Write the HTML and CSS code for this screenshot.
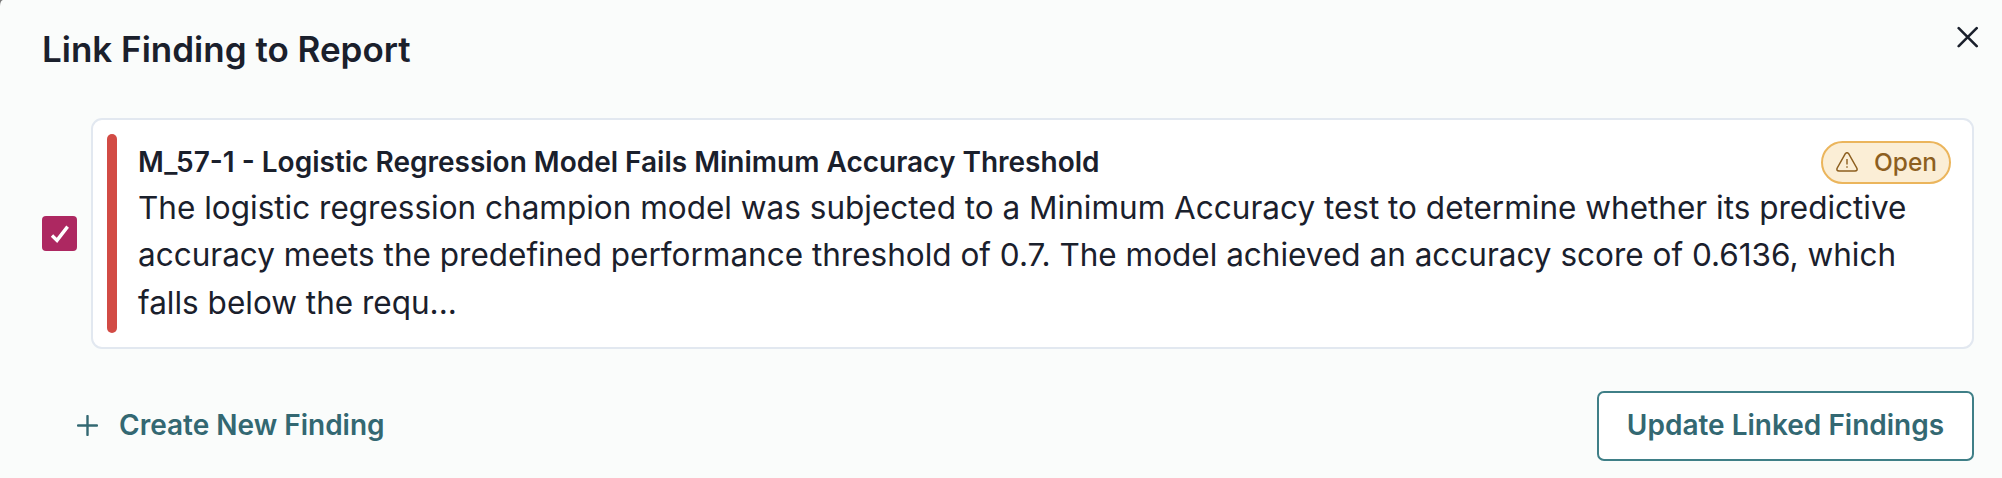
FILE: index.html
```html
<!DOCTYPE html>
<html lang="en">
<head>
<meta charset="utf-8">
<title>Link Finding to Report</title>
<link rel="stylesheet" href="styles.css">
</head>
<body>
<main class="dialog">
  <header class="header">
    <h1 class="title">Link Finding to Report</h1>
    <button class="close" aria-label="Close"><svg width="22" height="22" viewBox="0 0 22 22"><path d="M1.7 2.2 19.7 20.2M19.7 2.2 1.7 20.2" fill="none" stroke="#1a202c" stroke-width="2.6" stroke-linecap="round"/></svg></button>
  </header>
  <section class="row">
    <span class="check"><svg width="20" height="18" viewBox="0 0 20 18"><path d="M2 10.6 7 15.4 17.6 1.6" fill="none" stroke="#fff" stroke-width="3.4"/></svg></span>
    <article class="card">
      <div class="bar"></div>
      <div class="content">
        <div class="head">
          <h2 class="name">M_57-1 - Logistic Regression Model Fails Minimum Accuracy Threshold</h2>
          <span class="badge"><svg width="22" height="20" viewBox="0 0 22 20"><path d="M9.2 1.8 1.1 16.2Q.2 18.9 3 19H19Q21.8 18.9 20.9 16.2L12.8 1.8Q11 -.4 9.2 1.8Z" fill="none" stroke="#8d5f1f" stroke-width="1.5"/><path d="M11 7v5.6M11 14.2v1.6" fill="none" stroke="#8d5f1f" stroke-width="1.4"/></svg>Open</span>
        </div>
        <p class="text">The logistic regression champion model was subjected to a Minimum Accuracy test to determine whether its predictive<br>accuracy meets the predefined performance threshold of 0.7. The model achieved an accuracy score of 0.6136, which<br>falls below the requ...</p>
      </div>
    </article>
  </section>
  <footer class="footer">
    <button class="create"><svg width="21" height="21" viewBox="0 0 21 21"><path d="M10.5 1v19M1 10.5h19" fill="none" stroke="#336872" stroke-width="2.4" stroke-linecap="round"/></svg>Create New Finding</button>
    <button class="update">Update Linked Findings</button>
  </footer>
</main>
</body>
</html>
```
FILE: styles.css
```css
* { box-sizing: border-box; }
body { margin: 0; background: #777; color: #1a202c; font-family: Inter, sans-serif; }
button { font: inherit; border: 0; background: none; padding: 0; }
.dialog { width: 2002px; height: 478px; overflow: hidden; background: #fafcfb; border-top-left-radius: 3px 6px; }
.header { height: 118px; padding: 25px 23px 0 42px; display: flex; justify-content: space-between; align-items: flex-start; }
.title { margin: 0; font-size: 35px; line-height: 48px; font-weight: 600; }
.close { display: flex; padding-top: 1px; }
.row { display: flex; align-items: center; gap: 14px; padding: 0 28px 0 42px; }
.check { width: 35px; height: 35px; border-radius: 4px; background: #ad2861; display: flex; align-items: center; justify-content: center; flex: none; }
.card { flex: 1; height: 231px; display: flex; gap: 21px; padding: 14px 21px 14px 14px; border: 2px solid #e2e8f0; border-radius: 11px; background: #fff; }
.bar { width: 10px; border-radius: 5px; background: #d24b45; }
.content { flex: 1; white-space: nowrap; }
.head { display: flex; justify-content: space-between; height: 50px; padding-top: 7px; }
.name { margin: 0; font-size: 28px; line-height: 42px; font-weight: 600; }
.badge { width: 130px; height: 43px; padding: 0 0 2px 13px; border: 2px solid #ebb55c; border-radius: 22px; background: #fbeed6; color: #8d5f1f; display: flex; align-items: center; gap: 16px; font-size: 24.5px; font-weight: 500; }
.text { margin: 0; font-size: 31.5px; line-height: 47.25px; }
.footer { display: flex; justify-content: space-between; padding: 42px 28px 0 77px; color: #336872; font-size: 28px; font-weight: 600; }
.create { height: 70px; padding-bottom: 2px; display: flex; align-items: center; gap: 21px; color: inherit; }
.update { width: 377px; height: 70px; padding-bottom: 2px; border: 2px solid #3f7f87; border-radius: 7px; background: #fff; color: inherit; }
```
